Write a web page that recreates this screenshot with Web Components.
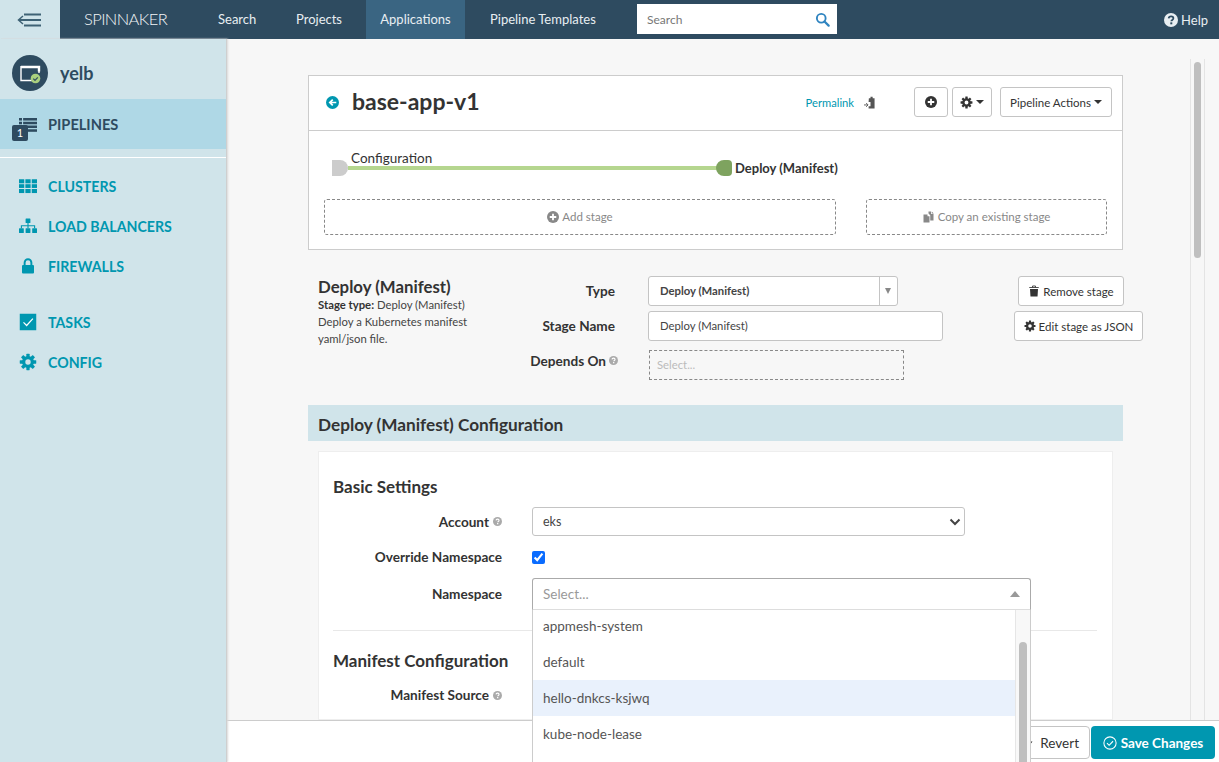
<!doctype html>
<html lang="en">
<head>
<meta charset="utf-8">
<title>Spinnaker</title>
<style>
	html, body { margin: 0; height: 100%; overflow: hidden; }
	body { font-family: Lato, "Open Sans", "Liberation Sans", sans-serif; font-size: 14px; color: #333; background: #f7f7f7; }
</style>
</head>
<body>
<spin-app>
	<spin-header slot="header"></spin-header>
	<spin-sidebar slot="sidebar"></spin-sidebar>
	<pipeline-panel></pipeline-panel>
	<stage-form></stage-form>
	<config-section></config-section>
	<spin-footer slot="footer"></spin-footer>
</spin-app>
<script>
const teeth = Array.from({ length: 8 }, (_, i) => `<rect x="9.8" y="1" width="4.4" height="5" rx=".6" transform="rotate(${i * 45} 12 12)"/>`).join("");
const icons = {
	gear: `<g fill="currentColor">${teeth}</g><circle cx="12" cy="12" r="5.8" fill="none" stroke="currentColor" stroke-width="4.4"/>`,
	grid: `<g fill="currentColor"><rect x="0" y="3" width="7" height="5.4"/><rect x="8.5" y="3" width="7" height="5.4"/><rect x="17" y="3" width="7" height="5.4"/><rect x="0" y="9.6" width="7" height="5"/><rect x="8.5" y="9.6" width="7" height="5"/><rect x="17" y="9.6" width="7" height="5"/><rect x="0" y="16" width="7" height="5.4"/><rect x="8.5" y="16" width="7" height="5.4"/><rect x="17" y="16" width="7" height="5.4"/></g>`,
	sitemap: `<g fill="currentColor"><rect x="8.8" y="2" width="6.4" height="6" rx=".7"/><rect x="0" y="15" width="6.4" height="6.4" rx=".7"/><rect x="8.8" y="15" width="6.4" height="6.4" rx=".7"/><rect x="17.6" y="15" width="6.4" height="6.4" rx=".7"/></g><path d="M12 8v7M3.2 15v-3.4h17.6V15" fill="none" stroke="currentColor" stroke-width="1.5"/>`,
	lock: `<path d="M7.5 11V7.5a4.5 4.5 0 0 1 9 0V11" fill="none" stroke="currentColor" stroke-width="2.6"/><rect x="4" y="10.5" width="16" height="11.5" rx="1.4" fill="currentColor"/>`,
	tasks: `<rect x="1" y="1" width="22" height="22" fill="currentColor"/><path d="M6 12.5l4.2 4.2L18.5 7.5" fill="none" stroke="#fff" stroke-width="1.6"/>`,
	list: `<g fill="currentColor"><rect x="0" y="4" width="4" height="3.4"/><rect x="5.5" y="4" width="18.5" height="3.4"/><rect x="0" y="9" width="4" height="3.4"/><rect x="5.5" y="9" width="18.5" height="3.4"/><rect x="0" y="14" width="4" height="3.4"/><rect x="5.5" y="14" width="18.5" height="3.4"/><rect x="5.5" y="19" width="18.5" height="3.4"/></g>`,
	search: `<circle cx="10" cy="10" r="7" fill="none" stroke="currentColor" stroke-width="3"/><path d="M15.2 15.2l6.6 6.6" stroke="currentColor" stroke-width="3.6" stroke-linecap="round"/>`,
	help: `<circle cx="12" cy="12" r="12" fill="currentColor"/><path d="M8 9.2c.3-2.2 2-3.4 4.1-3.4 2.2 0 4 1.3 4 3.4 0 2.6-3.6 2.8-3.6 5" fill="none" stroke="var(--hole, #fff)" stroke-width="3"/><rect x="10.8" y="16" width="3.4" height="3.4" fill="var(--hole, #fff)"/>`,
	plus: `<circle cx="12" cy="12" r="12" fill="currentColor"/><path d="M12 5.5v13M5.5 12h13" stroke="var(--hole, #fff)" stroke-width="3.6"/>`,
	back: `<circle cx="12" cy="12" r="12" fill="currentColor"/><path d="M19 12H8M12.5 6.5L7 12l5.5 5.5" fill="none" stroke="#fff" stroke-width="3.2"/>`,
	clipboard: `<path d="M9 4h3V1.500h4V4h3.500v19H8.500v-4h3.500v-8H8.500z" fill="currentColor"/><path d="M0 16.500h7M4 13l3.500 3.500L4 20" fill="none" stroke="currentColor" stroke-width="1.700"/>`,
	trash: `<path d="M4 8h16l-1 15H5z" fill="currentColor"/><path d="M2.5 5h19M9 4.5V2h6v2.500" fill="none" stroke="currentColor" stroke-width="1.700"/>`,
	files: `<path d="M1 7h8v3.500h4V23H1z" fill="currentColor"/><path d="M13 1h3v5h5v13h-6.500V8.500L11 5V1z" fill="currentColor"/><path d="M17.500 1l4 4h-4z" fill="currentColor"/>`,
	checkCircle: `<circle cx="12" cy="12" r="10.500" fill="none" stroke="currentColor" stroke-width="1.800"/><path d="M6.800 12.200l3.700 3.700 6.700-6.900" fill="none" stroke="currentColor" stroke-width="1.900"/>`,
	bolt: `<path d="M15 1L6 13h5L8 23l11-14h-6z" fill="currentColor"/>`,
	chevron: `<path d="M3 7l9 9 9-9" fill="none" stroke="currentColor" stroke-width="4"/>`
};

class ShadowBox extends HTMLElement {
	connectedCallback(){
		if(!this.shadowRoot){
			this.attachShadow({ mode: "open" }).innerHTML = this.constructor.markup;
		}
	}
}
const register = (name, markup) => customElements.define(name, class extends ShadowBox {
	static get markup(){ return markup; }
});

customElements.define("spin-icon", class extends HTMLElement {
	connectedCallback(){
		if(this.shadowRoot) return;
		const size = this.getAttribute("size") || 14;
		this.attachShadow({ mode: "open" }).innerHTML = `
			<style>:host { display: inline-flex; flex: none; line-height: 0; } svg { display: block; }</style>
			<svg width="${size}" height="${size}" viewBox="0 0 24 24">${icons[this.getAttribute("name")]}</svg>
		`;
	}
});

register("spin-app", `
	<style>
		:host { display: grid; grid-template-columns: 226px 1fr; grid-template-rows: 39px 681px 42px; height: 762px; }
		.head { grid-column: 1 / 3; }
		.side { grid-row: 2 / 4; }
		.body { display: flex; min-height: 0; height: 681px; }
		.stages { width: 964px; flex: none; padding: 36px 0 0 82px; box-sizing: border-box; }
		.track { flex: none; margin-top: 20px; border: solid #e4e4e4; border-width: 0 1px; padding: 3px 3px 0 3px; width: 7px; background: #f7f7f7; }
		.thumb { height: 196px; background: #bfbfbf; border-radius: 4px; }
	</style>
	<div class="head"><slot name="header"></slot></div>
	<div class="side"><slot name="sidebar"></slot></div>
	<div class="body">
		<div class="stages"><slot></slot></div>
		<div class="track"><div class="thumb"></div></div>
	</div>
	<div><slot name="footer"></slot></div>
`);

register("spin-header", `
	<style>
		:host { display: flex; align-items: stretch; height: 39px; background: #2e4b60; color: #e8eef2; font-size: 13px; }
		.toggle { width: 60px; background: #d0e4ea; display: flex; align-items: center; justify-content: center; }
		.brand { font-size: 16.5px; font-weight: 300; letter-spacing: -.6px; margin-left: 24px; width: 114px; line-height: 39px; color: #f2f5f7; }
		a { line-height: 39px; box-sizing: border-box; white-space: nowrap; }
		.search-link { width: 78px; padding-left: 20px; }
		.projects { width: 90px; padding-left: 20px; }
		.active { width: 99px; text-align: center; background: #3a6582; }
		.templates { width: 172px; padding-left: 25px; }
		.search { width: 200px; height: 30px; margin-top: 4px; background: #fff; color: #777; font-size: 12px; line-height: 31px; padding: 0 7px 0 10px; box-sizing: border-box; display: flex; justify-content: space-between; align-items: center; }
		.search spin-icon { color: #2f84c0; }
		.help { margin-left: auto; padding-right: 11px; display: flex; align-items: center; gap: 3px; }
	</style>
	<div class="toggle">
		<svg width="26" height="14" viewBox="0 0 26 14"><path d="M7 1.500h17M2 7h22M7 12.500h17" stroke="#3e6275" stroke-width="1.800" fill="none"/><path d="M6 3L1.500 7 6 11" stroke="#3e6275" stroke-width="1.500" fill="none"/></svg>
	</div>
	<div class="brand">SPINNAKER</div>
	<a class="search-link">Search</a>
	<a class="projects">Projects</a>
	<a class="active">Applications</a>
	<a class="templates">Pipeline Templates</a>
	<div class="search"><span>Search</span><spin-icon name="search" size="15"></spin-icon></div>
	<div class="help" style="--hole:#2e4b60"><spin-icon name="help" size="14"></spin-icon><span>Help</span></div>
`);

register("nav-item", `
	<style>
		:host { display: flex; align-items: center; height: 40px; padding-left: 19px; color: #0097b0; font-size: 14.2px; font-weight: 700; }
		.ic { width: 29px; display: flex; }
	</style>
	<span class="ic"><slot name="icon"></slot></span><slot></slot>
`);

register("spin-sidebar", `
	<style>
		:host { display: block; width: 226px; height: 723px; background: #d0e4ea; box-shadow: 1px 0 1px #cfcfcf, 2px 0 2px #ddd; position: relative; z-index: 3; }
		.app { display: flex; align-items: center; height: 36px; padding: 16px 0 8px 12px; gap: 12px; font-size: 18px; font-weight: 700; color: #2e4b60; }
		.avatar { width: 36px; height: 36px; }
		.current { height: 50px; background: #afd8e6; color: #2e4b60; display: flex; align-items: center; padding-left: 19px; font-size: 14.6px; font-weight: 700; position: relative; }
		.current .ic { width: 29px; display: flex; }
		.badge { position: absolute; left: 12px; top: 26px; width: 16px; height: 16px; border-radius: 2px; background: #2e4b60; color: #fff; font-size: 11px; font-weight: 400; line-height: 16px; text-align: center; }
		.rule { height: 1px; background: #fff; margin: 8px 0; }
		.gap { height: 16px; }
	</style>
	<div class="app">
		<svg class="avatar" viewBox="0 0 36 36"><circle cx="18" cy="18" r="18" fill="#2e4b60"/><path d="M9 12h18v4.500" fill="none" stroke="#fff" stroke-width="2.400"/><path d="M9 11v14.500h11" fill="none" stroke="#fff" stroke-width="1.400"/><path d="M27 11v7" stroke="#fff" stroke-width="1.400"/><circle cx="23.500" cy="23.500" r="4.800" fill="#a9cf7e"/><path d="M21.300 23.600l1.700 1.700 2.800-3" stroke="#2e4b60" stroke-width="1.200" fill="none"/></svg>
		<span>yelb</span>
	</div>
	<div class="current"><span class="ic"><spin-icon name="list" size="18"></spin-icon></span>PIPELINES<span class="badge">1</span></div>
	<div class="rule"></div>
	<nav-item><spin-icon slot="icon" name="grid" size="18"></spin-icon>CLUSTERS</nav-item>
	<nav-item><spin-icon slot="icon" name="sitemap" size="18"></spin-icon>LOAD BALANCERS</nav-item>
	<nav-item><spin-icon slot="icon" name="lock" size="18"></spin-icon>FIREWALLS</nav-item>
	<div class="gap"></div>
	<nav-item><spin-icon slot="icon" name="tasks" size="18"></spin-icon>TASKS</nav-item>
	<nav-item><spin-icon slot="icon" name="gear" size="18"></spin-icon>CONFIG</nav-item>
`);

register("spin-button", `
	<style>
		:host { display: inline-flex; align-items: center; justify-content: center; gap: 3px; box-sizing: border-box; height: 30px; background: #fff; border: 1px solid #c4c4c4; border-radius: 3px; font-size: 11.5px; color: #333; white-space: nowrap; }
	</style>
	<slot></slot>
`);

register("pipeline-panel", `
	<style>
		:host { display: block; width: 815px; height: 175px; box-sizing: border-box; background: #fff; border: 1px solid #ccc; }
		.top { display: flex; align-items: center; height: 52px; padding: 0 0 2px 17px; border-bottom: 1px solid #ccc; color: #0097b0; }
		h1 { margin: -3px 0 0 13px; font-size: 23px; font-weight: 700; color: #333; flex: 1; }
		.perm { font-size: 11.2px; color: #0097b0; margin-right: 10px; }
		.clip { color: #555; margin-right: 37px; }
		spin-button { color: #333; }
		.add { width: 34px; margin-right: 4px; }
		.cog { width: 40px; margin-right: 8px; }
		.act { width: 112px; margin-right: 10px; }
		.caret { border: 4px solid transparent; border-top-color: #333; border-bottom: 0; width: 0; height: 0; }
		.graph { position: relative; height: 68px; }
		.node-start { position: absolute; left: 23px; top: 29px; width: 16px; height: 16px; background: #ccc; border-radius: 0 8px 8px 0; }
		.line { position: absolute; left: 39px; top: 35px; width: 370px; height: 4px; background: #b5d68f; }
		.node-end { position: absolute; left: 407px; top: 29px; width: 16px; height: 16px; background: #7ea35f; border-radius: 8px 4px 4px 8px; }
		.l1 { position: absolute; left: 42px; top: 19px; font-size: 13.5px; color: #333; }
		.l2 { position: absolute; left: 426px; top: 29px; font-size: 13px; font-weight: 700; color: #333; }
		.adds { display: flex; gap: 30px; padding-left: 15px; }
		.slot { box-sizing: border-box; height: 36px; padding-bottom: 1px; border: 1px dashed #888; border-radius: 3px; display: flex; align-items: center; justify-content: center; gap: 3px; color: #888; font-size: 11.5px; --hole: #fff; }
	</style>
	<div class="top">
		<spin-icon name="back" size="13"></spin-icon>
		<h1>base-app-v1</h1>
		<span class="perm">Permalink</span>
		<spin-icon class="clip" name="clipboard" size="13"></spin-icon>
		<spin-button class="add"><spin-icon name="plus" size="12"></spin-icon></spin-button>
		<spin-button class="cog"><spin-icon name="gear" size="13"></spin-icon><span class="caret"></span></spin-button>
		<spin-button class="act">Pipeline Actions<span class="caret"></span></spin-button>
	</div>
	<div class="graph">
		<div class="line"></div>
		<div class="node-start"></div>
		<div class="node-end"></div>
		<div class="l1">Configuration</div>
		<div class="l2">Deploy (Manifest)</div>
	</div>
	<div class="adds">
		<div class="slot" style="width:512px"><spin-icon name="plus" size="12"></spin-icon>Add stage</div>
		<div class="slot" style="width:241px"><spin-icon name="files" size="12"></spin-icon>Copy an existing stage</div>
	</div>
`);

register("stage-form", `
	<style>
		:host { display: grid; grid-template-columns: 180px 117px 33px 295px 71px auto; grid-template-rows: 30px 30px 30px; row-gap: 5px; margin: 26px 0 29px; padding-left: 10px; width: 805px; font-size: 11.3px; white-space: nowrap; }
		.info { grid-row: 1 / 4; color: #444; line-height: 17px; margin-top: 2px; }
		h3 { margin: 0 0 1px; font-size: 16.8px; line-height: 17px; font-weight: 700; color: #333; }
		b { color: #333; }
		label { grid-column: 2; font-size: 13.6px; font-weight: 700; color: #333; text-align: right; line-height: 30px; position: relative; }
		label.dep { padding-right: 9px; line-height: 30px; }
		label spin-icon { position: absolute; right: -3px; top: 10px; color: #aaa; }
		.field { grid-column: 4; box-sizing: border-box; height: 30px; background: #fff; border: 1px solid #c4c4c4; border-radius: 3px; line-height: 28px; padding-left: 11px; color: #444; }
		.type-select { width: 250px; display: flex; font-weight: 700; padding-right: 0; }
		.type-select span { flex: 1; }
		.type-select i { width: 17px; border-left: 1px solid #c4c4c4; position: relative; }
		.type-select i::after { content: ""; position: absolute; left: 5px; top: 11px; border: 3.500px solid transparent; border-top: 6px solid #888; border-bottom: 0; }
		.depends { width: 255px; margin: 4px 0 0 1px; background: transparent; border: 1px dashed #888; border-radius: 0; padding-left: 7px; color: #bbb; }
		.btn { grid-column: 6; justify-self: start; }
		.remove { width: 106px; margin-left: 4px; }
		.edit { width: 129px; }
	</style>
	<div class="info">
		<h3>Deploy (Manifest)</h3>
		<div><b>Stage type:</b> Deploy (Manifest)</div>
		<div>Deploy a Kubernetes manifest</div>
		<div>yaml/json file.</div>
	</div>
	<label style="grid-row:1">Type</label>
	<div class="field type-select" style="grid-row:1"><span>Deploy (Manifest)</span><i></i></div>
	<spin-button class="btn remove" style="grid-row:1"><spin-icon name="trash" size="12"></spin-icon>Remove stage</spin-button>
	<label style="grid-row:2">Stage Name</label>
	<div class="field" style="grid-row:2">Deploy (Manifest)</div>
	<spin-button class="btn edit" style="grid-row:2"><spin-icon name="gear" size="12"></spin-icon>Edit stage as JSON</spin-button>
	<label class="dep" style="grid-row:3">Depends On<spin-icon name="help" size="9"></spin-icon></label>
	<div class="field depends" style="grid-row:3">Select...</div>
`);

register("namespace-menu", `
	<style>
		:host { display: block; position: relative; width: 499px; height: 32px; z-index: 5; font-size: 13.5px; }
		.box { box-sizing: border-box; height: 32px; background: #fff; border: 1px solid #aaa; border-bottom-color: #ddd; border-radius: 3px 3px 0 0; padding-left: 10px; line-height: 30px; color: #999; position: relative; }
		.box::after { content: ""; position: absolute; right: 10px; top: 12px; border: 5px solid transparent; border-bottom: 6px solid #999; border-top: 0; }
		.menu { position: absolute; left: 0; right: 0; top: 32px; height: 152px; box-sizing: border-box; background: #fff; border: solid #ccc; border-width: 0 1px; display: flex; overflow: hidden; }
		.list { flex: 1; margin-top: -2px; }
		.list div { height: 36px; line-height: 36px; padding-left: 10px; color: #555; }
		.list .hover { background: #e9f1fc; }
		.bar { width: 15px; background: #f8f8f8; border-left: 1px solid #e6e6e6; box-sizing: border-box; padding: 32px 3px 0 3px; }
		.bar i { display: block; height: 120px; background: #bfbfbf; border-radius: 4px 4px 0 0; }
	</style>
	<div class="box">Select...</div>
	<div class="menu">
		<div class="list">
			<div>appmesh-system</div>
			<div>default</div>
			<div class="hover">hello-dnkcs-ksjwq</div>
			<div>kube-node-lease</div>
		</div>
		<div class="bar"><i></i></div>
	</div>
`);

register("config-section", `
	<style>
		:host { display: block; width: 815px; }
		h2 { margin: 0 0 10px; height: 36px; background: #d0e4ea; padding-left: 10px; font-size: 17.2px; line-height: 40px; font-weight: 700; color: #333; }
		.card { margin-left: 10px; width: 795px; height: 269px; box-sizing: border-box; background: #fff; border: 1px solid #eee; padding: 0 15px 0 14px; }
		h4 { margin: 0; font-size: 17px; font-weight: 700; color: #333; line-height: 20px; }
		.basic { padding-top: 25px; margin-bottom: 10px; }
		.row { display: grid; grid-template-columns: 169px 1fr; column-gap: 30px; align-items: center; }
		.lab { font-size: 13.6px; font-weight: 700; color: #333; text-align: right; display: flex; justify-content: flex-end; align-items: center; gap: 4px; }
		.lab spin-icon { color: #aaa; }
		.select { box-sizing: border-box; width: 433px; height: 29px; background: #fff; border: 1px solid #c4c4c4; border-radius: 3px; display: flex; align-items: center; justify-content: space-between; padding: 0 3px 0 10px; color: #444; font-size: 12.5px; }
		.select spin-icon { color: #444; }
		input { margin: 0; width: 13px; height: 13px; accent-color: #0a6cff; display: block; }
		hr { border: 0; border-top: 1px solid #e8e8e8; margin: 20px 0 20px; }
	</style>
	<h2>Deploy (Manifest) Configuration</h2>
	<div class="card">
		<h4 class="basic">Basic Settings</h4>
		<div class="row" style="height:29px"><div class="lab">Account<spin-icon name="help" size="9"></spin-icon></div><div class="select">eks<spin-icon name="chevron" size="12"></spin-icon></div></div>
		<div class="row" style="height:42px"><div class="lab">Override Namespace</div><input type="checkbox" checked></div>
		<div class="row" style="height:32px"><div class="lab">Namespace</div><namespace-menu></namespace-menu></div>
		<hr>
		<h4>Manifest Configuration</h4>
		<div class="row" style="height:20px;margin-top:14px"><div class="lab">Manifest Source<spin-icon name="help" size="9"></spin-icon></div></div>
	</div>
`);

register("spin-footer", `
	<style>
		:host { display: flex; justify-content: flex-end; gap: 1px; box-sizing: border-box; height: 42px; padding: 5px 4px 0 0; background: #fff; border-top: 1px solid #ccc; position: relative; z-index: 1; }
		.revert { box-sizing: border-box; width: 81px; height: 33px; border: 1px solid #c4c4c4; border-radius: 4px; display: flex; align-items: center; justify-content: flex-end; gap: 5px; padding-right: 10px; font-size: 13.5px; color: #333; }
		.save { box-sizing: border-box; width: 124px; height: 33px; border-radius: 4px; background: #0097b0; color: #fff; display: flex; align-items: center; justify-content: center; gap: 4px; font-size: 13.5px; font-weight: 700; }
	</style>
	<div class="revert"><spin-icon name="bolt" size="12"></spin-icon>Revert</div>
	<div class="save"><spin-icon name="checkCircle" size="14"></spin-icon>Save Changes</div>
`);
</script>
</body>
</html>
